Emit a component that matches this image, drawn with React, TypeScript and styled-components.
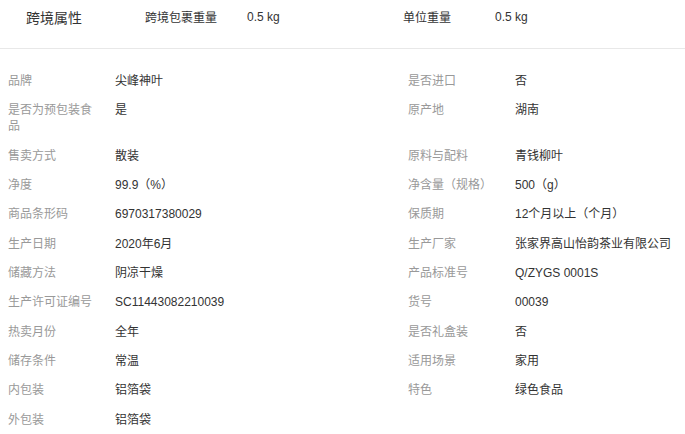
import React from "react";
import styled, { createGlobalStyle } from "styled-components";

const Global = createGlobalStyle`
  html, body { margin: 0; padding: 0; background: #fff; }
  body { font-family: "Liberation Sans", Arial, "Noto Sans CJK SC", sans-serif; }
`;

const Page = styled.div`
  width: 685px;
  background: #fff;
`;

const Cross = styled.div`
  display: flex;
  align-items: center;
  height: 33px;
  padding: 0 0 15px 26px;
  border-bottom: 1px solid #e8e8e8;
`;

const CrossTitle = styled.div`
  width: 119px;
  font-size: 14px;
  color: #333;
`;

const CrossLabel = styled.div<{ $w: number }>`
  width: ${(p) => p.$w}px;
  font-size: 12px;
  color: #333;
`;

const CrossValue = styled.div<{ $w: number }>`
  width: ${(p) => p.$w}px;
  font-size: 12px;
  color: #333;
`;

const Grid = styled.div`
  display: grid;
  grid-template-columns: 107px 293px 107px 1fr;
  padding: 23.5px 0 0 8px;
  row-gap: 12.83px;
  font-size: 12px;
  line-height: 16.5px;
`;

const Label = styled.div`
  color: #999;
  padding-right: 12px;
`;

const Value = styled.div`
  color: #333;
`;

const rows: [string, string, string?, string?][] = [
  ["品牌", "尖峰神叶", "是否进口", "否"],
  ["是否为预包装食品", "是", "原产地", "湖南"],
  ["售卖方式", "散装", "原料与配料", "青钱柳叶"],
  ["净度", "99.9（%）", "净含量（规格）", "500（g）"],
  ["商品条形码", "6970317380029", "保质期", "12个月以上（个月）"],
  ["生产日期", "2020年6月", "生产厂家", "张家界高山怡韵茶业有限公司"],
  ["储藏方法", "阴凉干燥", "产品标准号", "Q/ZYGS 0001S"],
  ["生产许可证编号", "SC11443082210039", "货号", "00039"],
  ["热卖月份", "全年", "是否礼盒装", "否"],
  ["储存条件", "常温", "适用场景", "家用"],
  ["内包装", "铝箔袋", "特色", "绿色食品"],
  ["外包装", "铝箔袋"],
];

export default function App() {
  return (
    <Page>
      <Global />
      <Cross>
        <CrossTitle>跨境属性</CrossTitle>
        <CrossLabel $w={102}>跨境包裹重量</CrossLabel>
        <CrossValue $w={156}>0.5 kg</CrossValue>
        <CrossLabel $w={92}>单位重量</CrossLabel>
        <CrossValue $w={80}>0.5 kg</CrossValue>
      </Cross>
      <Grid>
        {rows.map((r, i) => (
          <React.Fragment key={i}>
            <Label>{r[0]}</Label>
            <Value>{r[1]}</Value>
            <Label>{r[2] ?? ""}</Label>
            <Value>{r[3] ?? ""}</Value>
          </React.Fragment>
        ))}
      </Grid>
    </Page>
  );
}
